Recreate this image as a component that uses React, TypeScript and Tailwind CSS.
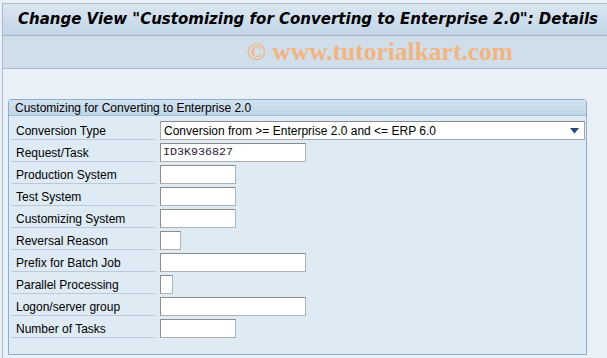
import { FC } from "react";

type Field = { label: string; width: number; value?: string };

const FIELDS: Field[] = [
  { label: "Request/Task", width: 146, value: "ID3K936827" },
  { label: "Production System", width: 76 },
  { label: "Test System", width: 76 },
  { label: "Customizing System", width: 76 },
  { label: "Reversal Reason", width: 21 },
  { label: "Prefix for Batch Job", width: 146 },
  { label: "Parallel Processing", width: 13 },
  { label: "Logon/server group", width: 146 },
  { label: "Number of Tasks", width: 76 },
];

const Label: FC<{ text: string }> = ({ text }) => (
  <div className="w-[143px] h-[19px] flex items-center pl-[4px] pt-[1px] border-b border-[#b9c9d9] text-[12px] text-black shrink-0">
    {text}
  </div>
);

const App: FC = () => {
  return (
    <div
      className="w-[607px] h-[358px] bg-[#e9f0f7] overflow-hidden flex flex-col pt-[3px] pl-[2px]"
      style={{ fontFamily: "'Liberation Sans', sans-serif" }}
    >
      <div className="flex-1 flex flex-col border-l border-t border-[#a9bccf]">
        <div className="h-[32px] shrink-0 bg-gradient-to-b from-[#dbe6f1] to-[#c3d5e7] border-b border-[#a4b9ce] flex items-center pl-[15px]">
          <span
            className="text-[15px] font-bold italic text-black whitespace-nowrap"
            style={{ fontFamily: "'DejaVu Sans', sans-serif" }}
          >
            Change View "Customizing for Converting to Enterprise 2.0": Details
          </span>
        </div>
        <div className="h-[33px] shrink-0 bg-[#d0deea] border-b border-[#a4b9ce] flex items-center justify-center pl-[150px]">
          <span
            className="text-[25.5px] font-bold text-[#f2b582] whitespace-nowrap"
            style={{ fontFamily: "'Liberation Serif', serif" }}
          >
            © www.tutorialkart.com
          </span>
        </div>
        <div className="flex-1 pt-[30px] pl-[5px] pr-[20px] pb-[3px] flex flex-col">
          <div className="flex-1 flex flex-col border border-[#8dadcd] rounded-t-[3px] bg-[#deeaf4]">
            <div className="h-[16px] shrink-0 bg-gradient-to-b from-[#d3e2ef] to-[#c0d5e8] border-b border-[#9fbad3] flex items-center pl-[6px] text-[12px] text-black">
              Customizing for Converting to Enterprise 2.0
            </div>
            <div className="flex flex-col gap-[3px] pt-[5px] pl-[3px]">
              <div className="flex items-center gap-[5px]">
                <Label text="Conversion Type" />
                <div className="flex-1 mr-[1px] h-[19px] bg-white border border-[#a6a6a6] border-t-[#8a8a8a] flex items-center justify-between pl-[3px] pr-[5px] text-[12px] text-black">
                  <span>Conversion from &gt;= Enterprise 2.0 and &lt;= ERP 6.0</span>
                  <svg width="9" height="6" viewBox="0 0 9 6">
                    <path d="M0 0 H9 L4.5 5.5 Z" fill="#24467e" />
                  </svg>
                </div>
              </div>
              {FIELDS.map((f) => (
                <div key={f.label} className="flex items-center gap-[5px]">
                  <Label text={f.label} />
                  <div
                    className="h-[19px] bg-white border border-[#b0b0b0] border-t-[#8c8c8c] border-l-[#8c8c8c] flex items-center pl-[2px] text-[12px] text-[#2a1838]"
                    style={{ width: f.width }}
                  >
                    {f.value && (
                      <span style={{ fontFamily: "'Liberation Mono', monospace" }} className="text-[11.7px]">
                        {f.value}
                      </span>
                    )}
                  </div>
                </div>
              ))}
            </div>
          </div>
        </div>
      </div>
    </div>
  );
};

export default App;
